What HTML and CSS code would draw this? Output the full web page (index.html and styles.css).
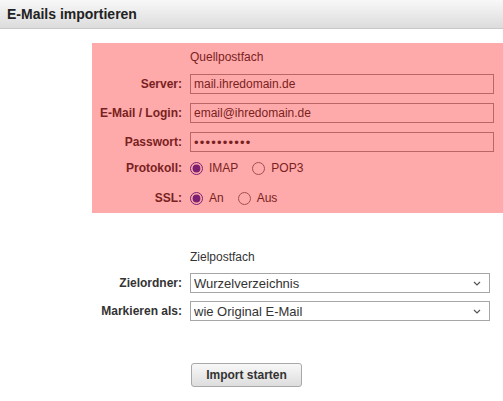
FILE: index.html
```html
<!DOCTYPE html>
<html>
<head>
<meta charset="UTF-8">
<title>E-Mails importieren</title>
<link rel="stylesheet" href="styles.css">
</head>
<body>
	<div class="titlebar">
		<h1>E-Mails importieren</h1>
	</div>

	<form class="import-form">
		<!-- Quellpostfach -->
		<div class="group source">
			<div class="row heading">
				<span></span>
				<span>Quellpostfach</span>
			</div>
			<div class="row field">
				<label for="server">Server:</label>
				<input type="text" id="server" value="mail.ihredomain.de">
			</div>
			<div class="row field">
				<label for="login">E-Mail / Login:</label>
				<input type="text" id="login" value="email@ihredomain.de">
			</div>
			<div class="row field">
				<label for="pass">Passwort:</label>
				<input type="password" id="pass" class="secret" value="geheim1234">
			</div>
			<div class="row choice first-choice">
				<label>Protokoll:</label>
				<div class="options">
					<label><input type="radio" name="proto" checked> IMAP</label>
					<label><input type="radio" name="proto"> POP3</label>
				</div>
			</div>
			<div class="row choice">
				<label>SSL:</label>
				<div class="options">
					<label><input type="radio" name="ssl" checked> An</label>
					<label><input type="radio" name="ssl"> Aus</label>
				</div>
			</div>
			<div class="marker"></div>
		</div>

		<!-- Zielpostfach -->
		<div class="group target">
			<div class="row heading">
				<span></span>
				<span>Zielpostfach</span>
			</div>
			<div class="row field">
				<label for="folder">Zielordner:</label>
				<span class="select-wrap">
					<select id="folder">
						<option>Wurzelverzeichnis</option>
					</select>
					<svg class="chevron" width="8" height="5" viewBox="0 0 8 5"><path d="M1 1l3 3 3-3" fill="none" stroke="#555" stroke-width="1.2"/></svg>
				</span>
			</div>
			<div class="row field">
				<label for="flag">Markieren als:</label>
				<span class="select-wrap">
					<select id="flag">
						<option>wie Original E-Mail</option>
					</select>
					<svg class="chevron" width="8" height="5" viewBox="0 0 8 5"><path d="M1 1l3 3 3-3" fill="none" stroke="#555" stroke-width="1.2"/></svg>
				</span>
			</div>
		</div>

		<div class="actions">
			<button type="button">Import starten</button>
		</div>
	</form>
</body>
</html>
```

FILE: styles.css
```css
body {
	margin: 0;
	font-family: "Liberation Sans", Arial, sans-serif;
	font-size: 12px;
	color: #333;
	background: #fff;
}

.titlebar {
	height: 28px;
	border-bottom: 1px solid #c8c8c8;
	background: linear-gradient(#f8f8f8, #dcdcdc);
}

.titlebar h1 {
	margin: 0;
	padding-left: 7px;
	font-size: 14px;
	line-height: 28px;
	color: #222;
}

.import-form {
	padding-top: 14px;
}

.group {
	position: relative;
}

.source {
	padding: 6px 0 4px;
}

.target {
	margin-top: 36px;
}

.row {
	display: grid;
	grid-template-columns: 182px 1fr;
	column-gap: 8px;
	align-items: center;
	padding-right: 9px;
}

.row > label {
	text-align: right;
	font-weight: bold;
}

.heading {
	height: 16px;
}

.field {
	height: 20px;
	margin-top: 9px;
}

.target .field {
	margin-top: 8px;
}

.field input,
.field select {
	box-sizing: border-box;
	height: 20px;
	margin: 0;
	border: 1px solid #9a9a9a;
	font-family: inherit;
	font-size: 12px;
	color: #333;
	background: #fff;
}

.field input {
	padding: 0 3px;
}

.field .secret {
	font-size: 13px;
	letter-spacing: 1.2px;
}

.select-wrap {
	position: relative;
	width: 300px;
	height: 20px;
}

.field select {
	appearance: none;
	width: 300px;
	padding: 0 3px;
	border-color: #a6a6a6;
	border-radius: 0;
	font-size: 13px;
}

.chevron {
	position: absolute;
	right: 9px;
	top: 8px;
	pointer-events: none;
}

.choice {
	height: 22px;
	margin-top: 8px;
}

.first-choice {
	margin-top: 5px;
}

.options {
	display: flex;
	gap: 14px;
}

.options label {
	display: flex;
	align-items: center;
	gap: 6px;
}

.options input {
	width: 13px;
	height: 13px;
	margin: 0;
	accent-color: #3b2fa8;
}

/* markierter Bereich über dem Quellpostfach */
.marker {
	position: absolute;
	top: 0;
	bottom: 0;
	left: 92px;
	right: 0;
	background: rgba(255, 0, 0, 0.333);
	pointer-events: none;
}

.actions {
	padding: 42px 0 0 191px;
}

.actions button {
	width: 111px;
	height: 24px;
	border: 1px solid #a8a8a8;
	border-radius: 3px;
	background: linear-gradient(#f8f8f8, #dddddd);
	font-family: inherit;
	font-size: 12px;
	font-weight: bold;
	color: #333;
}
```
